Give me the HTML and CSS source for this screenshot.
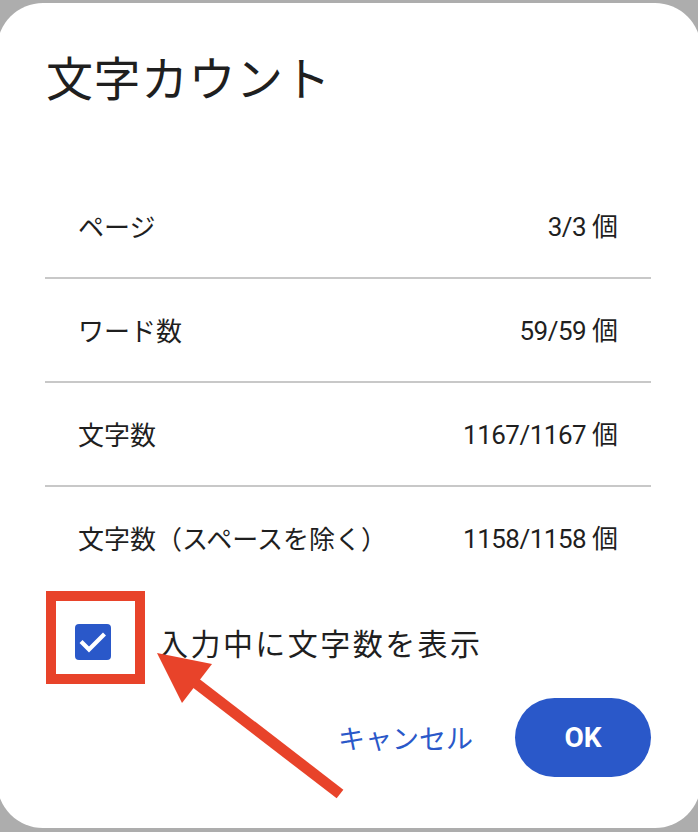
FILE: index.html
```html
<!DOCTYPE html>
<html lang="ja">
<head>
<meta charset="utf-8">
<title>文字カウント</title>
<link rel="stylesheet" href="styles.css">
</head>
<body>
<div class="dialog">
  <h1 class="title">文字カウント</h1>
  <div class="stats">
    <div class="row"><span class="label">ページ</span><span class="value"><span class="num">3/3</span> 個</span></div>
    <div class="row"><span class="label">ワード数</span><span class="value"><span class="num">59/59</span> 個</span></div>
    <div class="row"><span class="label">文字数</span><span class="value"><span class="num">1167/1167</span> 個</span></div>
    <div class="row"><span class="label">文字数（スペースを除く）</span><span class="value"><span class="num">1158/1158</span> 個</span></div>
  </div>
  <div class="option">
    <span class="checkbox">
      <svg viewBox="0 0 36 36" width="36" height="36"><path d="M7.5 19 L14 25.5 L28 11.5" fill="none" stroke="#fff" stroke-width="4.2" stroke-linecap="square"/></svg>
    </span>
    <span class="option-text">入力中に文字数を表示</span>
  </div>
  <div class="actions">
    <button class="btn-text">キャンセル</button>
    <button class="btn-ok">OK</button>
  </div>
</div>
<svg class="annot" width="698" height="832" viewBox="0 0 698 832">
  <rect x="51" y="596" width="89" height="83" fill="none" stroke="#e8432a" stroke-width="10"/>
  <line x1="188" y1="677" x2="340" y2="794" stroke="#e8432a" stroke-width="11"/>
  <polygon points="157,653 212,664 182,703" fill="#e8432a"/>
</svg>
</body>
</html>
```
FILE: styles.css
```css
html, body {
  margin: 0;
  padding: 0;
}
body {
  background: #adadad;
  width: 698px;
  height: 832px;
  overflow: hidden;
  position: relative;
  font-family: "Noto Sans CJK JP", "Noto Sans", sans-serif;
  color: #1f1f1f;
}
.dialog {
  margin: 3px -3px 0 -3px;
  width: 704px;
  height: 825px;
  box-sizing: border-box;
  background: #fff;
  border-radius: 46px;
  padding: 0 50px 0 48px;
  display: flex;
  flex-direction: column;
}
.title {
  margin: 45px 0 0 1px;
  font-size: 47px;
  font-weight: 400;
  line-height: 56px;
  letter-spacing: 0.5px;
}
.stats {
  margin-top: 71px;
  display: flex;
  flex-direction: column;
}
.row {
  height: 102px;
  display: flex;
  align-items: center;
  justify-content: space-between;
  padding: 0 33px;
  border-bottom: 2px solid #c8c8c8;
  font-size: 26px;
  line-height: 1;
}
.row:last-child {
  border-bottom: none;
}
.num {
  font-family: Roboto, "Noto Sans", sans-serif;
  letter-spacing: -0.5px;
}
.option {
  margin-top: 35px;
  display: flex;
  align-items: center;
  padding-left: 30px;
}
.checkbox {
  width: 36px;
  height: 36px;
  border-radius: 4px;
  background: #2a58c9;
  display: block;
}
.checkbox svg {
  display: block;
}
.option-text {
  margin-left: 47px;
  font-size: 30px;
  letter-spacing: 2.45px;
  line-height: 1;
}
.actions {
  margin-top: 38px;
  display: flex;
  justify-content: flex-end;
  align-items: center;
  gap: 42px;
}
.btn-text {
  border: none;
  background: none;
  padding: 0;
  font-family: "Noto Sans CJK JP", sans-serif;
  font-size: 27px;
  color: #2a58c9;
  line-height: 1;
}
.btn-ok {
  border: none;
  width: 136px;
  height: 79px;
  border-radius: 40px;
  background: #2a58c9;
  color: #fff;
  font-family: Roboto, "Noto Sans", sans-serif;
  font-weight: 700;
  font-size: 28px;
  padding: 0;
}
.annot {
  position: absolute;
  top: 0;
  left: 0;
  pointer-events: none;
}
```
